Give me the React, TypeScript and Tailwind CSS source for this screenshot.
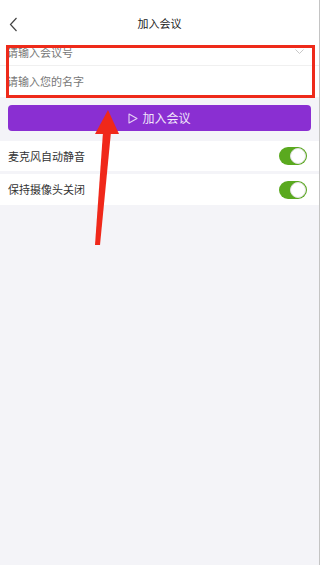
import React from "react";

function Toggle() {
  return (
    <div className="w-[28px] h-[18px] rounded-full bg-[#5aa91f] relative">
      <div className="absolute right-[1px] top-[1px] w-[16px] h-[16px] rounded-full bg-white border border-[#e0e0e0]" />
    </div>
  );
}

export default function App() {
  return (
    <div
      className="relative w-[320px] h-[565px] bg-[#f4f4f8] overflow-hidden border-r border-[#c4c4c4]"
      style={{ fontFamily: '"Noto Sans CJK SC", "Noto Sans", sans-serif' }}
    >
      {/* header */}
      <div className="relative h-[40px] bg-white flex items-center justify-center pt-[7px]">
        <svg className="absolute left-[9px] top-[17px]" width="9" height="15" viewBox="0 0 9 15">
          <path d="M7.5 1 L1.5 7.5 L7.5 14" fill="none" stroke="#444" strokeWidth="1.2" />
        </svg>
        <span className="text-[11px] text-[#222]">加入会议</span>
      </div>

      {/* inputs */}
      <div className="bg-white">
        <div className="h-[26px] flex items-center justify-between pl-[7px] pr-[15px] border-b border-[#f0f0f0]">
          <span className="text-[11px] text-[#777]">请输入会议号</span>
          <svg width="9" height="5" viewBox="0 0 9 5" className="-mt-[2px]">
            <path d="M0.5 0.5 L4.5 4.5 L8.5 0.5" fill="none" stroke="#c8c8c8" strokeWidth="1" />
          </svg>
        </div>
        <div className="h-[31px] flex items-center pl-[7px]">
          <span className="text-[11px] text-[#777]">请输入您的名字</span>
        </div>
      </div>

      {/* button */}
      <div className="mt-[8px] mx-[8px] h-[26px] rounded-[4px] bg-[#8a2fd2] flex items-center justify-center gap-[4px]">
        <svg width="10" height="11" viewBox="0 0 10 11">
          <path d="M1 1 L9 5.5 L1 10 Z" fill="none" stroke="#e6d2f6" strokeWidth="1.1" strokeLinejoin="round" />
        </svg>
        <span className="text-[12px] text-[#f1e6fa]">加入会议</span>
      </div>

      {/* options */}
      <div className="mt-[10px] h-[30px] bg-white flex items-center justify-between pl-[8px] pr-[12px]">
        <span className="text-[11px] text-[#333]">麦克风自动静音</span>
        <Toggle />
      </div>
      <div className="mt-[3px] h-[31px] bg-white flex items-center justify-between pl-[8px] pr-[12px]">
        <span className="text-[11px] text-[#333]">保持摄像头关闭</span>
        <Toggle />
      </div>

      {/* annotation: red box */}
      <div className="absolute left-[6px] top-[45px] w-[309px] h-[53px] border-[3px] border-[#ee2a1a]" />

      {/* annotation: arrow */}
      <svg className="absolute left-0 top-0" width="320" height="565" viewBox="0 0 320 565">
        <polygon points="108,110 95,134 119,134" fill="#f0281a" />
        <polygon points="103,132 111,132 100,245 95,245" fill="#f0281a" />
      </svg>
    </div>
  );
}
